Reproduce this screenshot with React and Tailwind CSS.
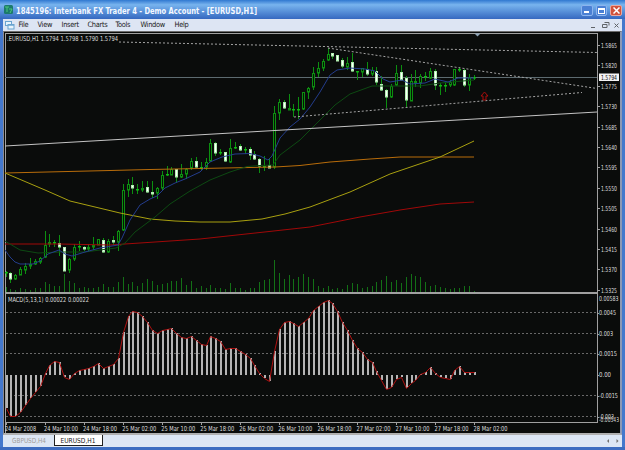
import clsx from "clsx";

const STEP = 4.88;
const barX = (i) => Math.round(5.5 + i * STEP);

// [high, body top, body bottom, low, bearish]
const candles = [
  [271, 272, 273, 277, 0], [272, 273, 279, 283, 1], [274, 275, 279, 280, 0],
  [267, 269, 275, 275, 0], [263, 266, 270, 274, 0], [258, 264, 266, 269, 0],
  [259, 261, 264, 265, 0], [257, 258, 262, 264, 0], [231, 245, 257, 258, 0],
  [234, 242, 244, 247, 0], [240, 242, 242, 247, 0], [235, 243, 247, 256, 1],
  [247, 247, 271, 271, 1], [258, 259, 270, 273, 0], [244, 247, 259, 261, 0],
  [241, 246, 246, 251, 0], [246, 247, 249, 251, 1], [244, 247, 249, 251, 0],
  [237, 245, 247, 250, 0], [239, 239, 245, 245, 0], [238, 240, 252, 253, 1],
  [239, 241, 252, 253, 0], [236, 240, 242, 245, 1], [230, 231, 242, 251, 0],
  [184, 190, 230, 231, 0], [179, 184, 190, 197, 0], [177, 185, 188, 194, 1],
  [184, 189, 189, 194, 0], [181, 188, 190, 192, 0], [181, 187, 192, 193, 1],
  [181, 192, 194, 198, 1], [187, 188, 193, 199, 0], [171, 175, 188, 190, 0],
  [166, 174, 175, 176, 0], [167, 169, 175, 175, 0], [169, 169, 177, 183, 1],
  [164, 174, 177, 178, 0], [168, 169, 174, 179, 0], [158, 161, 168, 170, 0],
  [157, 161, 167, 168, 1], [162, 167, 167, 171, 0], [158, 162, 167, 170, 0],
  [139, 143, 161, 162, 0], [142, 143, 153, 156, 1], [149, 152, 152, 155, 0],
  [152, 152, 161, 162, 1], [139, 148, 162, 163, 0], [142, 147, 147, 149, 0],
  [144, 146, 150, 151, 1], [147, 149, 149, 154, 0], [147, 149, 155, 160, 1],
  [151, 154, 159, 160, 1], [158, 159, 166, 173, 1], [156, 166, 166, 171, 0],
  [159, 165, 168, 168, 1], [106, 113, 167, 169, 0], [99, 102, 113, 120, 0],
  [100, 102, 108, 109, 1], [94, 108, 110, 110, 0], [104, 109, 109, 117, 0],
  [97, 109, 109, 119, 0], [92, 92, 109, 110, 0], [87, 88, 92, 99, 0],
  [67, 73, 87, 90, 0], [62, 68, 73, 77, 0], [59, 61, 68, 71, 0],
  [48, 54, 60, 61, 0], [53, 53, 56, 59, 1], [55, 55, 61, 61, 1],
  [58, 60, 66, 68, 1], [57, 63, 67, 70, 0], [53, 62, 71, 72, 1],
  [71, 71, 71, 80, 0], [68, 68, 72, 77, 0], [62, 69, 74, 76, 1],
  [67, 70, 74, 76, 0], [67, 71, 82, 85, 1], [76, 84, 90, 91, 1],
  [89, 90, 97, 108, 1], [84, 86, 97, 98, 0], [65, 73, 85, 86, 0],
  [65, 72, 80, 80, 1], [76, 78, 100, 107, 1], [74, 81, 101, 101, 0],
  [70, 81, 83, 87, 0], [74, 76, 83, 88, 0], [72, 76, 76, 81, 0],
  [68, 71, 78, 79, 0], [69, 71, 85, 90, 1], [83, 85, 86, 95, 0],
  [83, 85, 86, 92, 0], [80, 82, 85, 87, 0], [69, 69, 85, 86, 0],
  [67, 69, 70, 72, 0], [69, 70, 85, 87, 1], [74, 77, 85, 91, 0],
  [75, 77, 77, 80, 0],
];

const volumes = [
  5, 3, 2, 4, 3, 2, 4, 4, 10, 8, 6, 6, 18, 11, 9, 4, 5, 4, 4, 5, 8, 5, 5, 10,
  15, 8, 10, 6, 9, 13, 11, 7, 8, 9, 11, 11, 14, 7, 11, 4, 6, 4, 7, 4, 4, 3, 9,
  4, 4, 2, 4, 4, 10, 12, 13, 32, 19, 13, 17, 13, 15, 18, 15, 13, 6, 4, 6, 3, 4,
  3, 7, 9, 8, 4, 5, 6, 10, 12, 16, 10, 12, 9, 15, 18, 16, 15, 10, 6, 7, 5, 4,
  3, 4, 4, 6, 6, 1,
];

const macd = [
  408, 416, 416, 412, 405, 398, 392, 386, 373, 365, 361, 362, 377, 379, 373,
  370, 369, 368, 366, 363, 368, 366, 364, 358, 332, 316, 311, 312, 316, 322,
  330, 333, 330, 329, 328, 333, 337, 338, 336, 340, 344, 345, 336, 338, 341,
  349, 348, 348, 351, 354, 358, 365, 373, 378, 381, 351, 329, 322, 321, 323,
  326, 322, 318, 310, 306, 302, 300, 303, 311, 322, 330, 340, 348, 352, 359,
  362, 371, 380, 389, 387, 379, 377, 388, 383, 380, 374, 372, 367, 373, 377,
  378, 379, 370, 366, 372, 372, 372,
];
const ZERO = 375;

const lines = [
  { color: "#a00808", points: "5,244 60,244 110,245 140,243 200,239 260,232.5 310,227 360,217 400,210 440,204 474,202" },
  { color: "#b86c0a", points: "5,173 110,170.5 150,169.5 250,167.5 275,167 300,165.5 330,162 370,159 400,157 474,157" },
  { color: "#a8a010", points: "5,173 45,190 70,201 95,207 120,213 150,219 175,221 200,222 230,222 262,219 285,214 310,207 350,192 390,174 440,157 474,141" },
  { color: "#0d4a12", points: "5,241 20,250 38,253 60,252 85,252 100,250 116,248 125,243 135,232 155,217 170,204 190,191 210,180 230,172 247,166.5 260,165.5 273,165 280,155 300,140 320,120 335,105 350,94 372,86 400,86 420,86 440,83 474,80" },
  { color: "#233c8c", points: "5,250 10,257 15,262 20,264 33,264 40,261 48,254 59,250 65,254 72,256 85,252 100,248 118,245 122,238 130,220 140,205 150,199 157,196 165,188 175,183 185,179 200,172 210,162 222,157 235,154 250,153.5 260,156 268,160 272,156 280,138 290,127 300,119 310,107 320,92 330,75 337,70 350,68 365,69 375,71 383,79 390,82 402,80 410,84 425,83 435,79 448,82 458,78 474,78" },
  { color: "#c4c4c4", points: "5,146 597,112" },
];

const trendLines = [
  "119,42 597,52.5",
  "328,48 597,88.5",
  "294,117 582,92.5",
];

const prices = [
  ["1.5865", 45], ["1.5820", 65], ["1.5775", 86], ["1.5730", 106],
  ["1.5685", 127], ["1.5640", 147], ["1.5595", 167], ["1.5550", 188],
  ["1.5505", 208], ["1.5460", 229], ["1.5415", 249], ["1.5370", 269],
  ["1.5325", 290],
];

const macdLevels = [
  ["0.0045", 313, 17], ["0.003", 334, 14], ["0.0015", 354, 18],
  ["0.00", 375, 12], ["-0.0015", 396, 19], ["-0.003", 417, 15],
];

const times = [
  "24 Mar 2008", "24 Mar 10:00", "24 Mar 18:00", "25 Mar 02:00",
  "25 Mar 10:00", "25 Mar 18:00", "26 Mar 02:00", "26 Mar 10:00",
  "26 Mar 18:00", "27 Mar 02:00", "27 Mar 10:00", "27 Mar 18:00",
  "28 Mar 02:00",
];

const menus = [
  ["File", "w-[19px]"], ["View", "w-[24px]"], ["Insert", "w-[26px]"],
  ["Charts", "w-[28px]"], ["Tools", "w-[25px]"], ["Window", "w-[34px]"],
  ["Help", "w-[20px]"],
];

const Label = ({ x, y, w, children, fill = "#dcdcdc" }) => (
  <text x={x} y={y} textLength={w} lengthAdjust="spacingAndGlyphs" fill={fill}>
    {children}
  </text>
);

const Candle = ({ i, data }) => {
  const [high, top, bottom, low, bearish] = data;
  const x = barX(i);
  return (
    <g>
      <rect x={x} y={high} width="1" height={Math.max(low - high, 1)} fill="#0c8f10" />
      {bottom - top < 2 ? (
        <rect x={x - 1} y={top} width="3" height="1.5" fill="#10b814" />
      ) : (
        <rect
          x={x - 0.5}
          y={top + 0.5}
          width="2"
          height={bottom - top - 0.5}
          fill={bearish ? "#ffffff" : "#061406"}
          stroke={bearish ? "#b4f0b4" : "#0c8f10"}
          strokeWidth="1"
        />
      )}
    </g>
  );
};

const Chart = () => (
  <svg
    viewBox="4 32 615 401"
    className="block h-[401px] w-[615px] overflow-visible bg-[#0a0c0b] font-['DejaVu_Sans_Condensed','DejaVu_Sans',sans-serif] text-[6.8px]"
  >
    <g fill="none" shapeRendering="crispEdges">
      {/* frame */}
      <path d="M5.5 433V33.5H597.5V422.5H5.5" stroke="#a0a0a0" />
      <path d="M5 77.5H597" stroke="#5d6b70" />
      {prices.map(([p, y]) => (
        <path key={p} d={`M597 ${y + 0.5}h3`} stroke="#a0a0a0" />
      ))}
      {macdLevels.map(([p, y]) => (
        <g key={p}>
          <path d={`M597 ${y + 0.5}h2`} stroke="#a0a0a0" />
          {y !== ZERO && (
            <path d={`M6 ${y - 0.5}H597`} stroke="#686868" strokeDasharray="2 2" />
          )}
        </g>
      ))}
      {times.map((t, i) => (
        <path key={t} d={`M${barX(i * 8) + 0.5} 422v3`} stroke="#a0a0a0" />
      ))}
    </g>

    <g shapeRendering="crispEdges">
      {volumes.map((v, i) => (
        <rect key={i} x={barX(i)} y={292 - v} width="1" height={v} fill="#137016" />
      ))}
    </g>
    {candles.map((c, i) => (
      <Candle key={i} i={i} data={c} />
    ))}
    {lines.map((l) => (
      <polyline key={l.color} points={l.points} fill="none" stroke={l.color} strokeWidth="1" />
    ))}
    {trendLines.map((p) => (
      <polyline key={p} points={p} fill="none" stroke="#a4a4a4" strokeWidth="1" strokeDasharray="2 2" />
    ))}
    <path d="M474.500 33.500h6l-3 3z" fill="#8ea4b8" />
    <path
      d="M484.500 92l3.500 4h-2v4h-3v-4h-2z"
      fill="none"
      stroke="#a80c0c"
      strokeWidth="1"
    />

    {/* macd window */}
    <rect x="5" y="292" width="592" height="2" fill="#a0a0a0" />
    <g shapeRendering="crispEdges">
      {macd.map((y, i) => (
        <rect
          key={i}
          x={barX(i)}
          y={Math.min(y, ZERO)}
          width="2"
          height={Math.abs(y - ZERO)}
          fill="#b4b4b4"
        />
      ))}
    </g>
    <polyline
      points={macd.map((y, i) => `${barX(i) + 0.5},${y + 0.5}`).join(" ")}
      fill="none"
      stroke="#b01010"
      strokeWidth="1"
    />

    <Label x={7} y={41} w={111}>.EURUSD,H1  1.5794 1.5798 1.5790 1.5794</Label>
    <Label x={8} y={302} w={81}>MACD(5,13,1) 0.00022 0.00022</Label>
    {prices.map(([p, y]) => (
      <Label key={p} x={601} y={y + 2.5} w={16}>{p}</Label>
    ))}
    <rect x="599" y="73.500" width="20" height="7.500" fill="#f4f4f4" />
    <Label x={601} y={79.5} w={16} fill="#101010">1.5794</Label>
    <Label x={599} y={300.5} w={19.5}>0.00583</Label>
    {macdLevels.map(([p, y, w]) => (
      <Label key={p} x={599} y={y + 2} w={w}>{p}</Label>
    ))}
    <Label x={599} y={421.5} w={20}>-0.00543</Label>
    {times.map((t, i) => (
      <Label key={t} x={5 + i * 39.05} y={431} w={i ? 34 : 31}>{t}</Label>
    ))}
  </svg>
);

const TitleBar = () => (
  <div className="flex h-[19px] shrink-0 items-center bg-linear-to-b from-[#2f78d0] via-[#78b4ee] via-25% to-[#3568c0] pr-[3px] pl-[4px]">
    <svg viewBox="0 0 9 9" className="mr-[3px] size-[9px]">
      <rect width="9" height="9" rx="1.500" fill="#1c7a6c" />
      <path d="M1 2h4M3 2v5M5 4h3l-2 4" stroke="#48c878" fill="none" />
    </svg>
    <svg viewBox="0 0 246 12" className="mt-[2px] h-[12px] w-[246px] overflow-visible font-['DejaVu_Sans_Condensed','DejaVu_Sans',sans-serif] text-[8.5px] font-bold">
      <Label x={0} y={9} w={241} fill="#f4f8ff">
        1845196: Interbank FX Trader 4 - Demo Account - [EURUSD,H1]
      </Label>
    </svg>
    <div className="mt-[2px] ml-auto flex gap-[3px]">
      <div className="flex h-[11px] w-[12px] items-end rounded-[2px] border border-[#8cb4ee] bg-[#4a80d4] p-[2px]">
        <div className="h-[2px] w-[5px] bg-white" />
      </div>
      <div className="flex h-[11px] w-[11px] items-center justify-center rounded-[2px] border border-[#8cb4ee] bg-[#4a80d4]">
        <div className="h-[6px] w-[7px] border border-t-2 border-white" />
      </div>
      <div className="flex h-[11px] w-[12px] items-center justify-center rounded-[2px] border border-[#e8a8a0] bg-[#d0523c]">
        <svg viewBox="0 0 7 7" className="size-[7px]">
          <path d="M.5.500l6 6M6.500.500l-6 6" stroke="#fff" strokeWidth="1.500" />
        </svg>
      </div>
    </div>
  </div>
);

const MenuBar = () => (
  <div className="flex h-[12px] items-center bg-[#dde5f3] pr-[3px] pl-[2px]">
    <svg viewBox="0 0 10 9" className="mr-[3.5px] h-[9px] w-[10px]" fill="#e8f4fc" stroke="#6aa4d0">
      <rect x=".5" y=".5" width="6" height="4" />
      <rect x="3" y="3.500" width="6" height="4.500" />
      <path d="M3 4h6" strokeWidth="1.500" />
    </svg>
    <div className="flex font-['DejaVu_Sans_Condensed','DejaVu_Sans',sans-serif] text-[7.4px] leading-[12px] tracking-[-0.3px] text-[#202020]">
      {menus.map(([name, width]) => (
        <span key={name} className={clsx("shrink-0", width)}>{name}</span>
      ))}
    </div>
    <svg viewBox="0 0 28 8" className="ml-auto h-[8px] w-[28px]" fill="none" stroke="#606468">
      <path d="M0 6.500h4M13.500 1.500h4.500v3M11.500 3.500h4.500v3h-4.500zM23.500 2.500l4 4M27.500 2.500l-4 4" />
    </svg>
  </div>
);

const Tabs = () => (
  <div className="flex h-[12px] items-start bg-[#dce6f4] pl-[1px] font-['DejaVu_Sans_Condensed','DejaVu_Sans',sans-serif] text-[7px] leading-[10px]">
    <svg viewBox="0 0 50 11" className="h-[11px] w-[50px] overflow-visible">
      <Label x={8} y={8} w={34} fill="#a09c98">GBPUSD,H4</Label>
    </svg>
    <div className="border-r border-b border-l border-[#202020] bg-white">
      <svg viewBox="0 0 47 10" className="block h-[10px] w-[47px] overflow-visible">
        <Label x={5.5} y={8} w={35} fill="#202020">EURUSD,H1</Label>
      </svg>
    </div>
    <svg viewBox="0 0 14 6" className="mt-[3px] mr-[2px] ml-auto h-[6px] w-[14px]">
      <path d="M3 1v4L1 3zM10.500 1v4l2-2z" fill="#707070" />
    </svg>
  </div>
);

const App = () => {
  return (
    <div className="flex h-[450px] w-[625px] flex-col overflow-hidden bg-[#4478cc]">
      <TitleBar />
      <div className="mx-[3px] flex shrink-0 flex-col">
        <MenuBar />
        <div className="border-t border-r-2 border-b-2 border-l border-t-[#6c6c6c] border-r-[#8c98b4] border-b-[#b0b0b0] border-l-[#8a8a90] bg-[#0a0c0b]">
          <Chart />
        </div>
        <Tabs />
      </div>
      <div className="h-[3px] shrink-0 bg-[#3c6cc0]" />
    </div>
  );
};

export default App;
